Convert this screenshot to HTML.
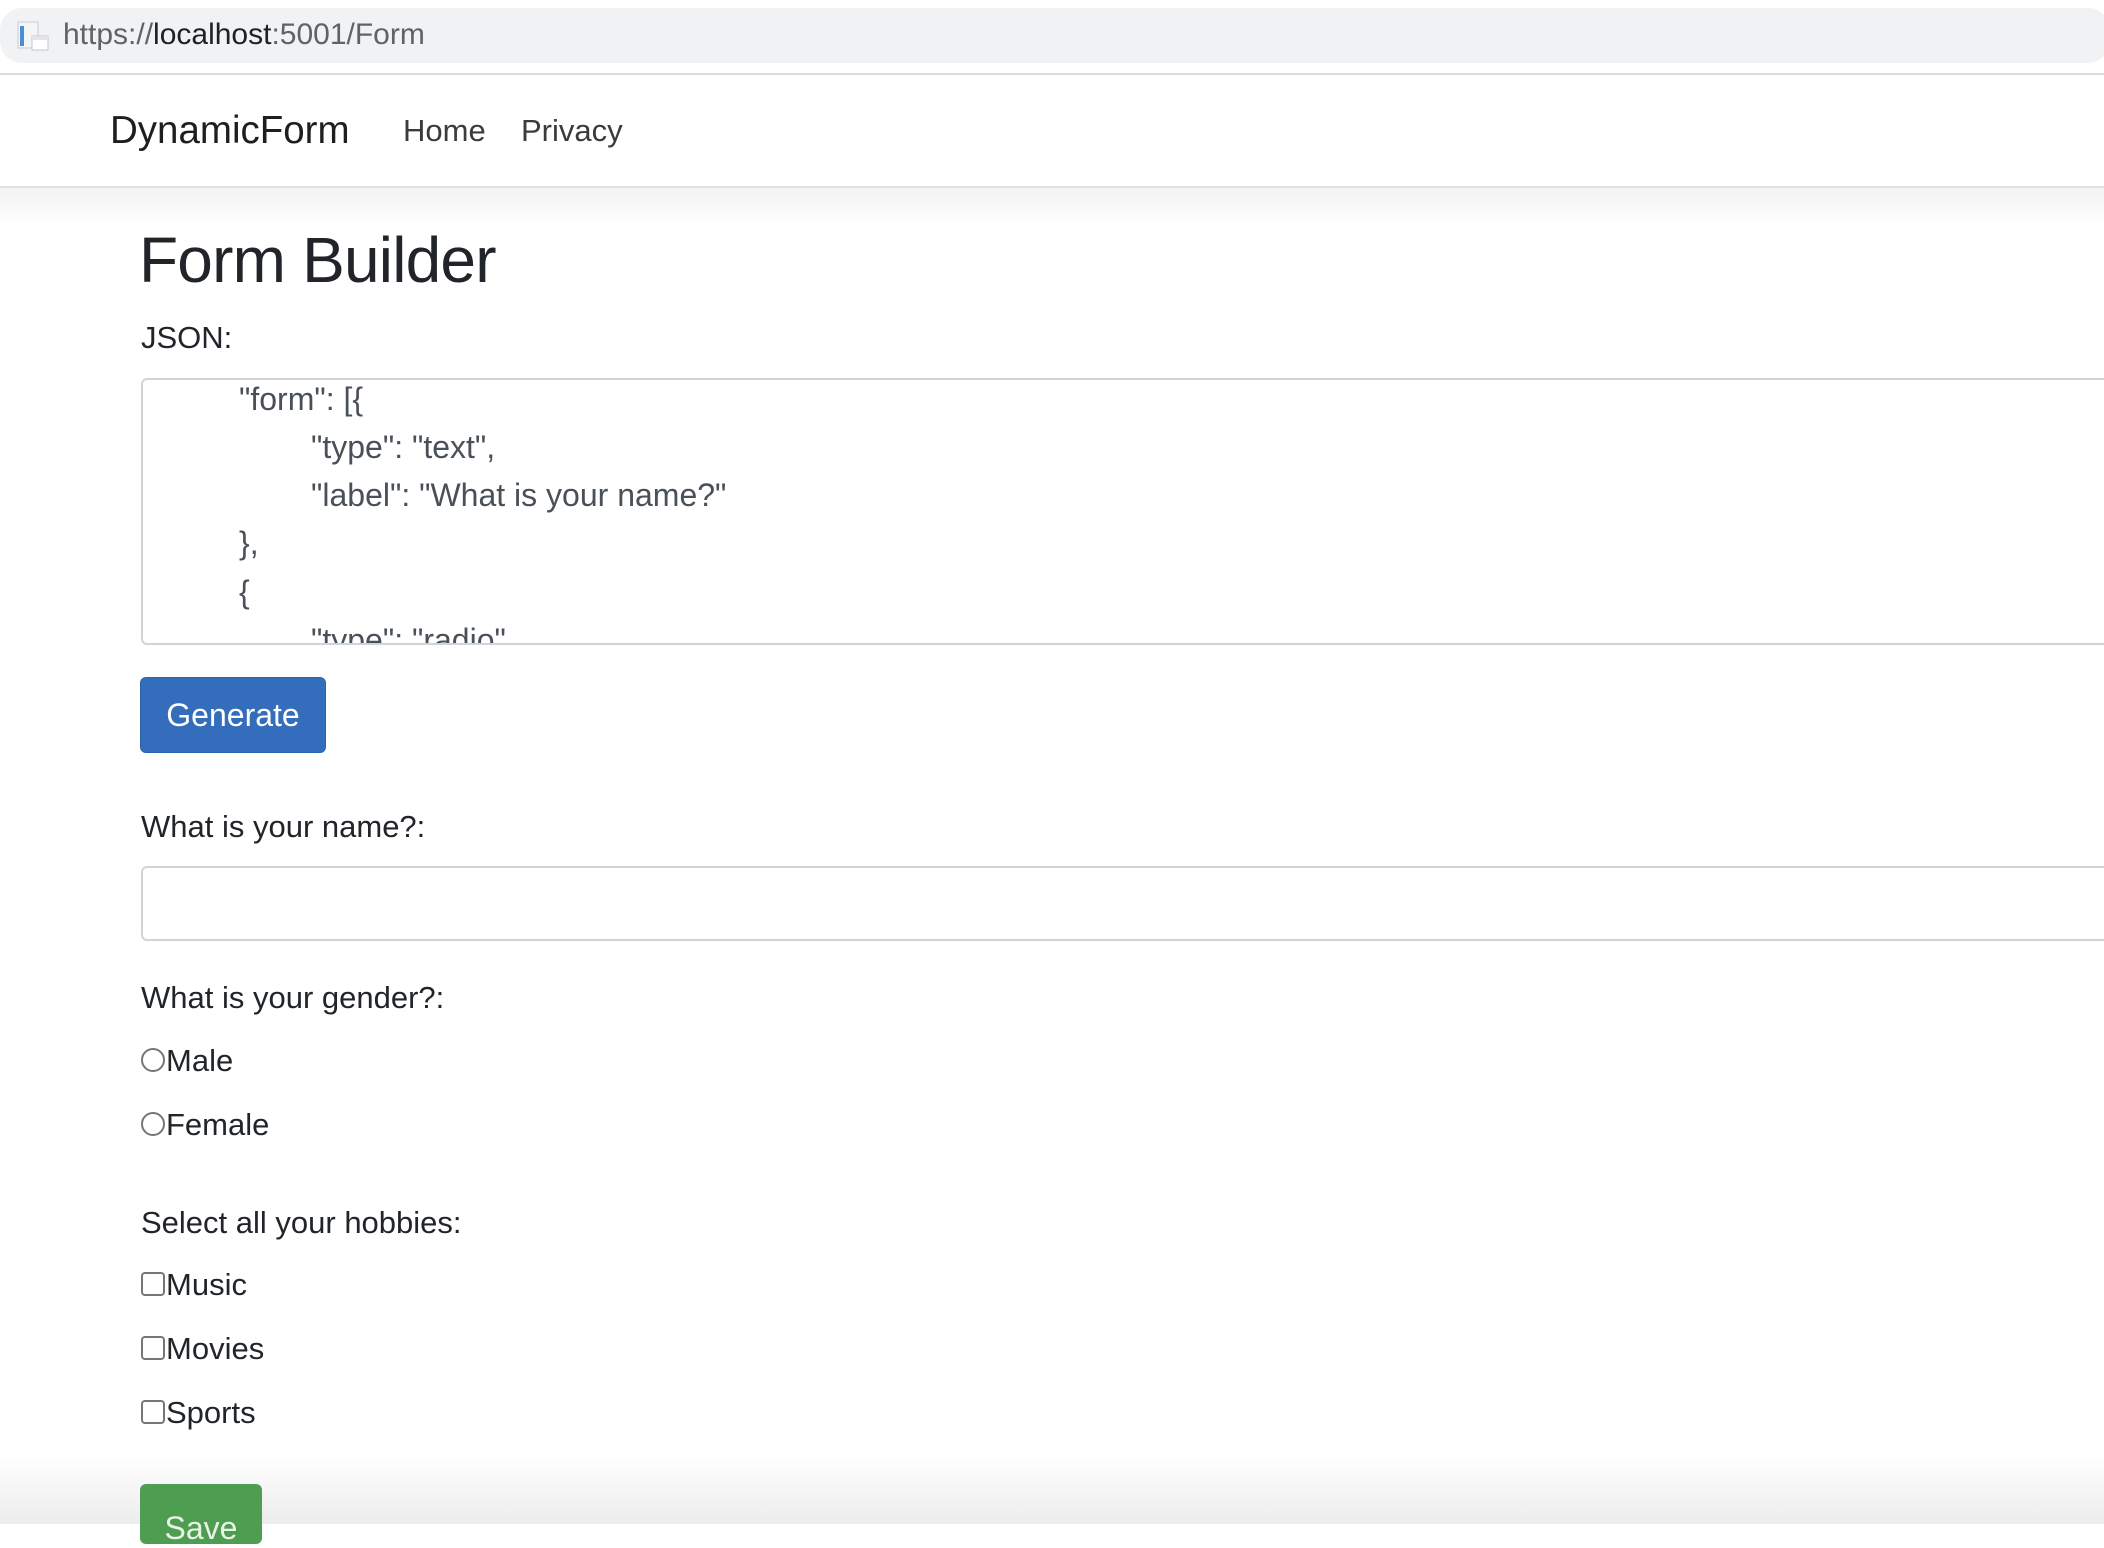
<!DOCTYPE html>
<html><head><meta charset="utf-8"><style>
*{box-sizing:border-box;margin:0;padding:0}
html,body{width:2104px;height:1524px;overflow:hidden;background:#fff;font-family:"Liberation Sans",Arial,sans-serif;color:#212529}
.abs{position:absolute;white-space:nowrap}
.lbl{font-size:31px;line-height:34px}
</style></head><body>
<div class="abs" style="left:0;top:8px;width:2110px;height:55px;background:#f1f2f4;border-radius:22px"></div>
<svg class="abs" style="left:16px;top:20px" width="34" height="34" viewBox="0 0 34 34">
<rect x="2" y="2" width="20" height="26" fill="#f4f5f7" stroke="#c8ccd2"/>
<rect x="4" y="6" width="4" height="20" fill="#4a8fd6"/>
<rect x="16" y="16" width="16" height="14" fill="#fff" stroke="#c0c4ca"/>
<rect x="16" y="16" width="16" height="4" fill="#e2e4e8"/>
</svg>
<div class="abs" style="left:63px;top:18px;font-size:30px;line-height:34px;color:#5f6368">https://<span style="color:#202124">localhost</span>:5001/Form</div>
<div class="abs" style="left:0;top:73px;width:2104px;height:2px;background:#dcdcdc"></div>
<div class="abs" style="left:110px;top:109px;font-size:38.5px;line-height:44px;color:#1e1e1e">DynamicForm</div>
<div class="abs" style="left:403px;top:113px;font-size:31px;line-height:36px;color:#3b3b3b">Home</div>
<div class="abs" style="left:521px;top:113px;font-size:31px;line-height:36px;color:#3b3b3b">Privacy</div>
<div class="abs" style="left:0;top:186px;width:2104px;height:2px;background:#e0e0e4"></div>
<div class="abs" style="left:0;top:188px;width:2104px;height:40px;background:linear-gradient(#f3f3f5,#fff)"></div>
<div class="abs" style="left:139px;top:222px;font-size:64px;line-height:76px;font-weight:500;letter-spacing:-0.8px;color:#212529">Form Builder</div>
<div class="abs lbl" style="left:141px;top:321px">JSON:</div>
<div class="abs" style="left:141px;top:378px;width:2000px;height:267px;border:2px solid #ced4da;border-radius:6px;overflow:hidden;font-size:32px;line-height:48.3px;color:#495057">
<div style="position:absolute;left:96px;top:-5px;white-space:pre">"form": [{</div>
<div style="position:absolute;left:168px;top:43px;white-space:pre">"type": "text",</div>
<div style="position:absolute;left:168px;top:91px;white-space:pre">"label": "What is your name?"</div>
<div style="position:absolute;left:96px;top:139px;white-space:pre">},</div>
<div style="position:absolute;left:96px;top:188px;white-space:pre">{</div>
<div style="position:absolute;left:168px;top:236px;white-space:pre">"type": "radio",</div>
</div>
<div class="abs" style="left:140px;top:677px;width:186px;height:76px;background:#336dbc;border:1px solid #2b63ad;border-radius:6px;color:#fff;font-size:32px;line-height:74px;text-align:center">Generate</div>
<div class="abs lbl" style="left:141px;top:810px">What is your name?:</div>
<div class="abs" style="left:141px;top:866px;width:2000px;height:75px;border:2px solid #ced4da;border-radius:6px"></div>
<div class="abs lbl" style="left:141px;top:981px">What is your gender?:</div>
<div class="abs" style="left:141px;top:1048px;width:24px;height:24px;border:2px solid #767676;border-radius:50%"></div>
<div class="abs lbl" style="left:166px;top:1044px">Male</div>
<div class="abs" style="left:141px;top:1112px;width:24px;height:24px;border:2px solid #767676;border-radius:50%"></div>
<div class="abs lbl" style="left:166px;top:1108px">Female</div>
<div class="abs lbl" style="left:141px;top:1206px">Select all your hobbies:</div>
<div class="abs" style="left:141px;top:1272px;width:24px;height:24px;border:2px solid #767676;border-radius:4px"></div>
<div class="abs lbl" style="left:166px;top:1268px">Music</div>
<div class="abs" style="left:141px;top:1336px;width:24px;height:24px;border:2px solid #767676;border-radius:4px"></div>
<div class="abs lbl" style="left:166px;top:1332px">Movies</div>
<div class="abs" style="left:141px;top:1400px;width:24px;height:24px;border:2px solid #767676;border-radius:4px"></div>
<div class="abs lbl" style="left:166px;top:1396px">Sports</div>
<div class="abs" style="left:0;top:1455px;width:2104px;height:69px;background:linear-gradient(#fff,#ececec)"></div>
<div class="abs" style="left:140px;top:1484px;width:122px;height:60px;background:#4f9d50;border-radius:6px;color:#e8f3e8;font-size:32px;line-height:40px;padding-top:24px;text-align:center">Save</div>
</body></html>
